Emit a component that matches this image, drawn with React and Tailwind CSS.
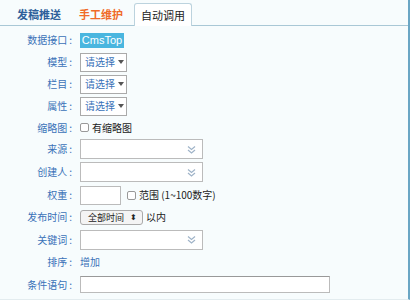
import React from 'react';

const font = { fontFamily: '"Noto Sans CJK SC", "Liberation Sans", sans-serif' };

const Caret = () => (
  <svg width="6" height="4" viewBox="0 0 6 4" className="ml-[3px] shrink-0">
    <path d="M0 0h6L3 4z" fill="#555" />
  </svg>
);

const DoubleChevron = () => (
  <svg width="9" height="9" viewBox="0 0 9 9" fill="none" stroke="#9fb3c8" strokeWidth="1.2">
    <path d="M1 1.5l3.5 3 3.5-3" />
    <path d="M1 5l3.5 3 3.5-3" />
  </svg>
);

const Choose = () => (
  <div className="flex h-[19px] w-[47px] items-center whitespace-nowrap border border-[#aaa] bg-white pl-[4px] text-[10px] leading-none text-[#3a72b8]">
    请选择
    <Caret />
  </div>
);

const Combo = () => (
  <div className="flex h-[20px] w-[123px] items-center justify-end border border-[#bbb] bg-white pr-[6px]">
    <DoubleChevron />
  </div>
);

const Check = () => (
  <span className="inline-block h-[9px] w-[9px] rounded-[2px] border border-[#999] bg-white" />
);

const Row = ({ label, h, children }) => (
  <div className="flex items-center" style={{ height: h }}>
    <div className="w-[73px] shrink-0 whitespace-nowrap pr-[1px] text-right text-[10px] leading-none text-[#3a72b8]">
      {label}
      <span className="ml-[2px]">:</span>
    </div>
    <div className="ml-[7px] flex items-center whitespace-nowrap">{children}</div>
  </div>
);

export default function App() {
  return (
    <div className="h-[300px] w-[410px] overflow-hidden border-r-2 border-b border-[#6aa6c4] border-b-[#e3ecef] bg-[#f7fcfd]" style={font}>
      <div className="flex h-[26px] items-end border-b border-[#a9c8d6]">
        <div className="ml-[17px] mb-[5px] text-[11px] font-bold leading-none text-[#2d5f9a]">发稿推送</div>
        <div className="ml-[18px] mb-[5px] text-[11px] font-bold leading-none text-[#f06a28]">手工维护</div>
        <div className="ml-[11px] -mb-px flex h-[23px] w-[58px] items-center justify-center rounded-t-[3px] border border-b-0 border-[#bcd3de] bg-white text-[11px] leading-none text-[#222]">
          自动调用
        </div>
      </div>
      <div className="pt-[3px]">
        <Row label="数据接口" h={22}>
          <div className="flex h-[15px] w-[44px] items-center justify-center bg-[#4ab6df] text-[11px] leading-none text-white" style={{ fontFamily: '"Liberation Sans", sans-serif' }}>CmsTop</div>
        </Row>
        <Row label="模型" h={22}><Choose /></Row>
        <Row label="栏目" h={22}><Choose /></Row>
        <Row label="属性" h={22}><Choose /></Row>
        <Row label="缩略图" h={21}>
          <Check />
          <span className="ml-[3px] text-[10px] leading-none text-[#222]">有缩略图</span>
        </Row>
        <Row label="来源" h={22}><Combo /></Row>
        <Row label="创建人" h={24}><Combo /></Row>
        <Row label="权重" h={22}>
          <div className="h-[19px] w-[41px] border border-[#bbb] bg-white" />
          <span className="ml-[6px] flex"><Check /></span>
          <span className="ml-[3px] text-[10px] leading-none text-[#222]">范围 (1~100数字)</span>
        </Row>
        <Row label="发布时间" h={22}>
          <div className="flex h-[15px] w-[63px] items-center justify-between rounded-[3px] border border-[#aaa] bg-[#f4f4f4] pl-[7px] pr-[5px] text-[9px] leading-none text-[#222]">
            全部时间
            <span className="text-[8px] leading-none">⬍</span>
          </div>
          <span className="ml-[3px] text-[10px] leading-none text-[#222]">以内</span>
        </Row>
        <Row label="关键词" h={23}><Combo /></Row>
        <Row label="排序" h={22}>
          <span className="text-[10px] leading-none text-[#3a72b8]">增加</span>
        </Row>
        <Row label="条件语句" h={23}>
          <div className="h-[17px] w-[250px] border border-[#bbb] border-t-[#999] bg-white" />
        </Row>
      </div>
    </div>
  );
}
